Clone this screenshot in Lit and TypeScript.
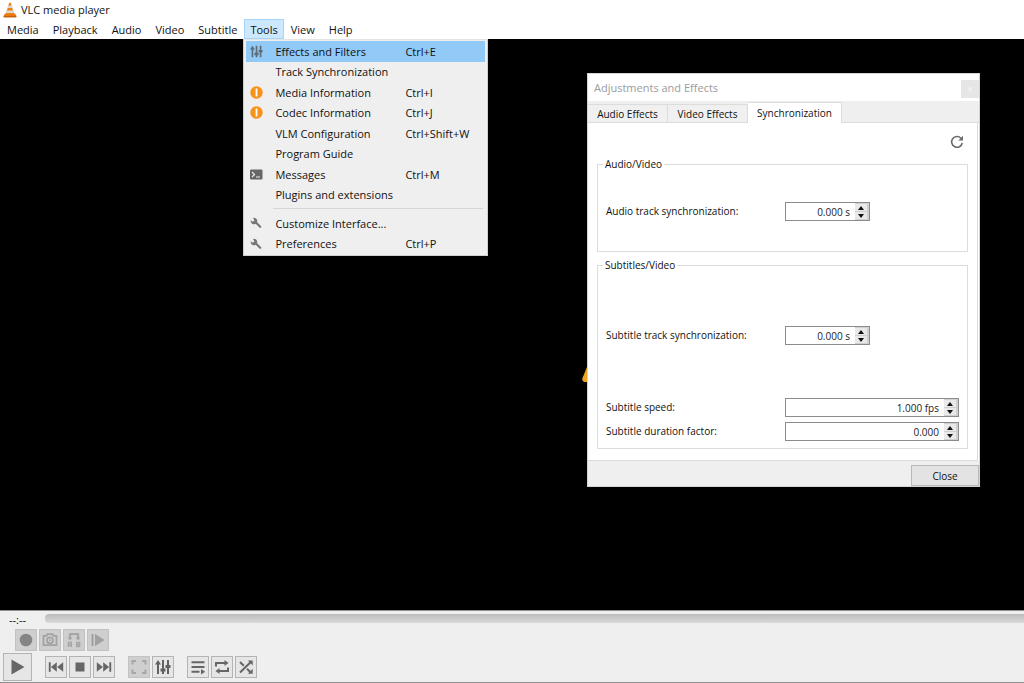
import { LitElement, html, css, svg } from "lit";
import { customElement, property } from "lit/decorators.js";
import { classMap } from "lit/directives/class-map.js";

type MenuEntry = { label: string; keys?: string; icon?: string; active?: boolean };

const icons: Record<string, unknown> = {
  cone: svg`<svg viewBox="0 0 14 16" width="14" height="16">
    <path d="M2 11.500h10l1.600 2.800a.7.7 0 0 1-.6 1H1a.7.7 0 0 1-.6-1z" fill="#e8770c"/>
    <path d="M6.200.8h1.600L11 11.600c-1.500 1.500-6.500 1.500-8 0z" fill="#e9820f"/>
    <path d="M5.400 3.500h3.200l.8 2.600H4.600zM3.800 8.600h6.400l.7 2.500H3.100z" fill="#ded8d4"/>
    <path d="M1 14.200h12v1.100H1z" fill="#b75a0b"/></svg>`,
  sliders: svg`<svg viewBox="0 0 16 16" width="16" height="16" fill="currentColor">
    <path d="M2 5h2v10H2zM0 5.500l3-4.500 3 4.500zM7 1h2v10H7zM5.500 9.500h5v3h-5zM7 12h2v3H7zM12 1h2v14h-2zM10.500 6h5v3h-5z"/></svg>`,
  smallSliders: svg`<svg viewBox="0 0 16 16" width="13" height="13" fill="currentColor">
    <path d="M2 5h2v10H2zM0 5.500l3-4.500 3 4.500zM7 1h2v10H7zM5.500 9.500h5v3h-5zM7 12h2v3H7zM12 1h2v14h-2zM10.500 6h5v3h-5z"/></svg>`,
  info: svg`<svg viewBox="0 0 13 13" width="13" height="13"><circle cx="6.500" cy="6.500" r="6.200" fill="#f7931a"/>
    <path d="M5.600 2.500h1.800v8H5.600z" fill="#fff"/></svg>`,
  terminal: svg`<svg viewBox="0 0 13 11" width="13" height="11"><rect y=".5" width="12.500" height="10" rx="1" fill="#666"/>
    <path d="M2 3l2.500 2.500L2 8M6 8h4" fill="none" stroke="#eee" stroke-width="1.200"/></svg>`,
  wrench: svg`<svg viewBox="0 0 12 12" width="12" height="12"><path d="M5.200 4.800l5 5" stroke="#777" stroke-width="2.200" stroke-linecap="round"/>
    <path d="M3 .9A3.300 3.300 0 1 1 .8 3.200l2 1.500 1.600-1.300z" fill="#777"/></svg>`,
  reset: svg`<svg viewBox="0 0 14 14" width="14" height="14"><path d="M11 3.200A5.400 5.400 0 1 0 12.300 8" fill="none" stroke="#6c6c6c" stroke-width="1.600"/>
    <path d="M13 .8v4.700H8.300z" fill="#6c6c6c"/></svg>`,
  record: svg`<svg viewBox="0 0 16 16" width="16" height="16"><circle cx="8" cy="8" r="6.300" fill="#858585"/></svg>`,
  camera: svg`<svg viewBox="0 0 16 16" width="16" height="16" fill="none" stroke="#a3a3a3" stroke-width="1.800">
    <path d="M1.500 3.800h3l1-1.600h5l1 1.600h3v9.400h-13z"/><circle cx="8" cy="8.300" r="3"/><circle cx="8" cy="8.300" r="1" fill="#a3a3a3" stroke="none"/></svg>`,
  loopab: svg`<svg viewBox="0 0 16 16" width="16" height="16" fill="none" stroke="#a6a6a6">
    <path d="M4 7V2h8v5" stroke-width="2.200"/><path d="M1.500 5.500h5L4 8.500zM9.500 5.500h5L12 8.500z" fill="#a6a6a6" stroke="none"/>
    <path d="M2.500 15v-4.400h2.800V15M2.500 13h2.800M10.800 10.600h2.800v3.900h-2.800zM10.800 12.500h2.800" stroke-width="1.500"/></svg>`,
  frame: svg`<svg viewBox="0 0 16 16" width="16" height="16" fill="#a0a0a0"><path d="M1.500 2h2v12h-2zM5 2l9.500 6L5 14z"/></svg>`,
  play: svg`<svg viewBox="0 0 16 16" width="16" height="16" fill="#666"><path d="M1.500.5L14.500 8 1.500 15.500z"/></svg>`,
  prev: svg`<svg viewBox="0 0 16 16" width="16" height="16" fill="#666"><path d="M.8 3.200h1.900v9.600H.8zM8.800 3.200v9.600L2.900 8zM15.200 3.200v9.600L9.100 8z"/></svg>`,
  stop: svg`<svg viewBox="0 0 16 16" width="16" height="16" fill="#666"><path d="M3.500 3.500h9v9h-9z"/></svg>`,
  next: svg`<svg viewBox="0 0 16 16" width="16" height="16" fill="#666"><path d="M13.300 3.200h1.900v9.600h-1.900zM7.200 3.200v9.600L13.100 8zM.8 3.200v9.600L6.900 8z"/></svg>`,
  full: svg`<svg viewBox="0 0 16 16" width="16" height="16" fill="none" stroke="#a6a6a6" stroke-width="2"><path d="M1.500 5.500v-3.500h3.500M11 2h3.500v3.500M14.500 10.500V14H11M5 14H1.500v-3.500"/></svg>`,
  playlist: svg`<svg viewBox="0 0 16 16" width="16" height="16" fill="#666"><path d="M1.500 2.200h13v2h-13zM1.500 7h13v2h-13zM1.500 11.800h8v2h-8zM11 10l4.200 2.800L11 15.600z"/></svg>`,
  loop: svg`<svg viewBox="0 0 16 16" width="16" height="16" fill="none" stroke="#666" stroke-width="2"><path d="M2 7.500V4h9.500M14 8.500V12H4.500"/><path d="M10.500 1l4 3-4 3zM5.500 9l-4 3 4 3z" fill="#666" stroke="none"/></svg>`,
  shuffle: svg`<svg viewBox="0 0 16 16" width="16" height="16" fill="none" stroke="#666" stroke-width="2"><path d="M2 3l3.800 3.800M9 9.800l3.500 3.500M2 13.500L12.800 3"/><path d="M9.800 1.500h4.900v4.900zM9.800 14.700h4.900V9.800z" fill="#666" stroke="none"/></svg>`,
};

@customElement("spin-field")
class SpinField extends LitElement {
  @property() value = "";
  @property() name = "";

  static styles = css`
    :host { display: block; min-width: 0; }
    .row { display: grid; grid-template-columns: 179px minmax(0, 1fr); align-items: center; }
    .label { line-height: 19px; white-space: nowrap; }
    .box {
      box-sizing: border-box; display: flex; height: 19px; width: var(--spin-width, 100%);
      border: 1px solid #8c8c8c; background: #fff;
    }
    .input {
      flex: 1; min-width: 0; border: 0; padding: 0 5px 0 0; margin: 0; background: none;
      font: inherit; text-align: right; color: #222; outline: none;
    }
    .steps { display: flex; flex-direction: column; width: 12px; padding: 1px 2px 1px 0; background: #d0d0d0; gap: 1px; }
    .step {
      flex: 1; min-height: 0; display: flex; align-items: center; justify-content: center;
      padding: 0; margin: 0; border: 0; background: #e9e9e9;
    }
  `;

  render() {
    return html`<div class="row">
      <label class="label" for="field">${this.name}</label>
      <div class="box">
        <input class="input" id="field" type="text" .value=${this.value} />
        <div class="steps">
          <button class="step" aria-label="Increase"><svg width="6" height="4" viewBox="0 0 6 4"><path d="M0 4l3-4 3 4z" fill="#111"/></svg></button>
          <button class="step" aria-label="Decrease"><svg width="6" height="4" viewBox="0 0 6 4"><path d="M0 0l3 4 3-4z" fill="#111"/></svg></button>
        </div>
      </div>
    </div>`;
  }
}

@customElement("effects-dialog")
class EffectsDialog extends LitElement {
  static styles = css`
    :host { display: flex; flex-direction: column; background: #fff; color: #111; border: 1px solid #d4d4d4; box-sizing: border-box; font-family: "Open Sans", sans-serif; font-size: 10px; }
    .title { display: flex; align-items: center; justify-content: space-between; height: 27px; padding-left: 6px; color: #9b9b9b; font-size: 11px; }
    .x { width: 18px; height: 18px; padding: 0; margin-top: 2px; border: 0; background: #e6e6e6; color: #f4f4f4; font-size: 11px; line-height: 16px; }
    .tabs { display: flex; align-items: flex-end; height: 22px; background: #efefef; border-bottom: 1px solid #dcdcdc; box-sizing: border-box; }
    .tab {
      box-sizing: border-box; height: 18px; width: 80px; padding: 0; border: 1px solid #dcdcdc; border-width: 1px 1px 0 0;
      background: #f0f0f0; color: #111; font: inherit; line-height: 16px; white-space: nowrap;
    }
    .current { width: 94px; height: 21px; margin-bottom: -1px; background: #fff; line-height: 18px; }
    .panel { padding: 0 9px 11px; margin-right: 1px; border-right: 1px solid #dcdcdc; border-bottom: 1px solid #dcdcdc; }
    .bar { display: flex; justify-content: flex-end; align-items: center; height: 34px; padding: 3px 4px 0; box-sizing: border-box; }
    .reset { display: flex; padding: 0; border: 0; background: none; }
    .group { margin: 0; border: 1px solid #dcdcdc; min-width: 0; padding: 31px 8px 30px; }
    .subs { margin-top: 6px; padding: 54px 8px 7px; }
    .legend { padding: 0 2px; margin-left: -3px; line-height: 14px; }
    .short { --spin-width: 85px; }
    .apart { margin-bottom: 53px; }
    .next { margin-top: 5px; }
    .footer { display: flex; justify-content: flex-end; background: #efefef; padding-top: 4px; }
    .close { width: 68px; height: 21px; border: 1px solid #b9b9b9; background: #e3e3e3; color: #111; font: inherit; padding: 0; }
  `;

  render() {
    return html`
      <div class="title"><span>Adjustments and Effects</span><button class="x" aria-label="Close window">×</button></div>
      <div class="tabs" role="tablist">
        <button class="tab" role="tab">Audio Effects</button>
        <button class="tab" role="tab">Video Effects</button>
        <button class="tab current" role="tab" aria-selected="true">Synchronization</button>
      </div>
      <div class="panel">
        <div class="bar"><button class="reset" aria-label="Refresh">${icons.reset}</button></div>
        <fieldset class="group">
          <legend class="legend">Audio/Video</legend>
          <spin-field class="short" name="Audio track synchronization:" value="0.000 s"></spin-field>
        </fieldset>
        <fieldset class="group subs">
          <legend class="legend">Subtitles/Video</legend>
          <spin-field class="short apart" name="Subtitle track synchronization:" value="0.000 s"></spin-field>
          <spin-field name="Subtitle speed:" value="1.000 fps"></spin-field>
          <spin-field class="next" name="Subtitle duration factor:" value="0.000"></spin-field>
        </fieldset>
      </div>
      <div class="footer"><button class="close">Close</button></div>`;
  }
}

@customElement("tools-menu")
class ToolsMenu extends LitElement {
  static styles = css`
    :host { display: block; box-sizing: border-box; background: #efefef; border: 1px solid #cfcfcf; border-top-color: #e4e4e4; padding: 1px 2px 1px; color: #111; }
    .list { display: grid; grid-auto-rows: 1fr; }
    .main { height: 164px; }
    .more { height: 41px; }
    .item {
      display: grid; grid-template-columns: 29px 130px 1fr; align-items: center; width: 100%; min-height: 0;
      border: 0; padding: 0; background: none; color: inherit; font: inherit; text-align: left; white-space: nowrap;
    }
    .active { background: #91c9f7; }
    .icon { display: flex; justify-content: center; width: 20px; color: #5d6c78; }
    .rule { height: 1px; border: 0; background: #d5d5d5; margin: 3px 2px 4px 27px; }
  `;

  private entries(list: MenuEntry[]) {
    return list.map((e) => html`<button role="menuitem" class=${classMap({ item: true, active: !!e.active })}>
      <span class="icon">${e.icon ? icons[e.icon] : ""}</span><span>${e.label}</span><span>${e.keys ?? ""}</span>
    </button>`);
  }

  render() {
    return html`
      <div class="list main">${this.entries([
        { label: "Effects and Filters", keys: "Ctrl+E", icon: "smallSliders", active: true },
        { label: "Track Synchronization" },
        { label: "Media Information", keys: "Ctrl+I", icon: "info" },
        { label: "Codec Information", keys: "Ctrl+J", icon: "info" },
        { label: "VLM Configuration", keys: "Ctrl+Shift+W" },
        { label: "Program Guide" },
        { label: "Messages", keys: "Ctrl+M", icon: "terminal" },
        { label: "Plugins and extensions" },
      ])}</div>
      <hr class="rule" />
      <div class="list more">${this.entries([
        { label: "Customize Interface...", icon: "wrench" },
        { label: "Preferences", keys: "Ctrl+P", icon: "wrench" },
      ])}</div>`;
  }
}

@customElement("app-root")
class AppRoot extends LitElement {
  static styles = css`
    :host {
      display: grid; grid-template-rows: auto auto 1fr auto; height: 100vh; overflow: hidden;
      font-family: "Open Sans", sans-serif; font-size: 11px; color: #111; background: #fff;
    }
    .title { display: flex; align-items: center; gap: 4px; height: 19px; padding-left: 3px; }
    .menus { display: flex; height: 20px; }
    .slot { position: relative; display: flex; }
    .menu { border: 1px solid transparent; padding: 0 6px; background: none; color: inherit; font: inherit; white-space: nowrap; }
    .open { padding: 0 5px; background: #cce8ff; border-color: #a5d5fa; }
    .dropdown { position: absolute; z-index: 2; left: -1px; top: 20px; width: 245px; }
    .video { position: relative; background: #000; }
    .art { position: absolute; left: 57%; top: 323px; margin-left: -2px; }
    .dialog { position: absolute; right: 44px; top: 34px; width: 393px; }
    .controls { background: #efefef; border-top: 1px solid #8f8f8f; border-bottom: 1px solid #8f8f8f; }
    .seek { display: flex; align-items: flex-start; height: 18px; padding-top: 1px; box-sizing: border-box; }
    .time { width: 45px; box-sizing: border-box; padding-left: 9px; line-height: 16px; }
    .track { flex: 1; height: 9px; margin: 2px 0 0; padding: 0; appearance: none; outline: none; border-radius: 4px 0 0 4px; background: linear-gradient(#bcbcbc, #d9d9d9); }
    .track::-webkit-slider-thumb { appearance: none; width: 0; height: 0; }
    .row { display: flex; gap: 2px; padding-left: 15px; }
    .transport { display: flex; align-items: center; gap: 13px; padding: 2px 3px 1px; }
    .set { display: flex; gap: 2px; }
    .btn {
      box-sizing: border-box; width: 22px; height: 22px; padding: 0; display: flex; align-items: center; justify-content: center;
      border: 1px solid #b4b4b4; background: #e6e6e6; color: #606060;
    }
    .off { background: #cfcfcf; border-color: #c2c2c2; }
    .big { width: 29px; height: 28px; }
  `;

  private button(icon: string, label: string, off = false, big = false) {
    return html`<button aria-label=${label} class=${classMap({ btn: true, off, big })}>${icons[icon]}</button>`;
  }

  render() {
    return html`
      <div class="title">${icons.cone}<span>VLC media player</span></div>
      <div class="menus">
        ${["Media", "Playback", "Audio", "Video", "Subtitle", "Tools", "View", "Help"].map((name) => {
          const open = name === "Tools";
          return html`<div class="slot"><button class=${classMap({ menu: true, open })}>${name}</button>
            ${open ? html`<tools-menu class="dropdown"></tools-menu>` : ""}</div>`;
        })}
      </div>
      <div class="video">
        <svg class="art" width="30" height="20" viewBox="0 0 30 20"><path d="M7 0L.5 16a3 3 0 0 0 2 4H30V0z" fill="#eda51f"/></svg>
        <effects-dialog class="dialog"></effects-dialog>
      </div>
      <div class="controls">
        <div class="seek"><span class="time">--:--</span><input class="track" type="range" aria-label="Position" value="0" /></div>
        <div class="row">
          ${this.button("record", "Record", true)}${this.button("camera", "Snapshot", true)}
          ${this.button("loopab", "Loop A to B", true)}${this.button("frame", "Frame by frame", true)}
        </div>
        <div class="transport">
          ${this.button("play", "Play", false, true)}
          <div class="set">${this.button("prev", "Previous")}${this.button("stop", "Stop")}${this.button("next", "Next")}</div>
          <div class="set">${this.button("full", "Fullscreen", true)}${this.button("sliders", "Extended settings")}</div>
          <div class="set">${this.button("playlist", "Playlist")}${this.button("loop", "Loop")}${this.button("shuffle", "Random")}</div>
        </div>
      </div>`;
  }
}
